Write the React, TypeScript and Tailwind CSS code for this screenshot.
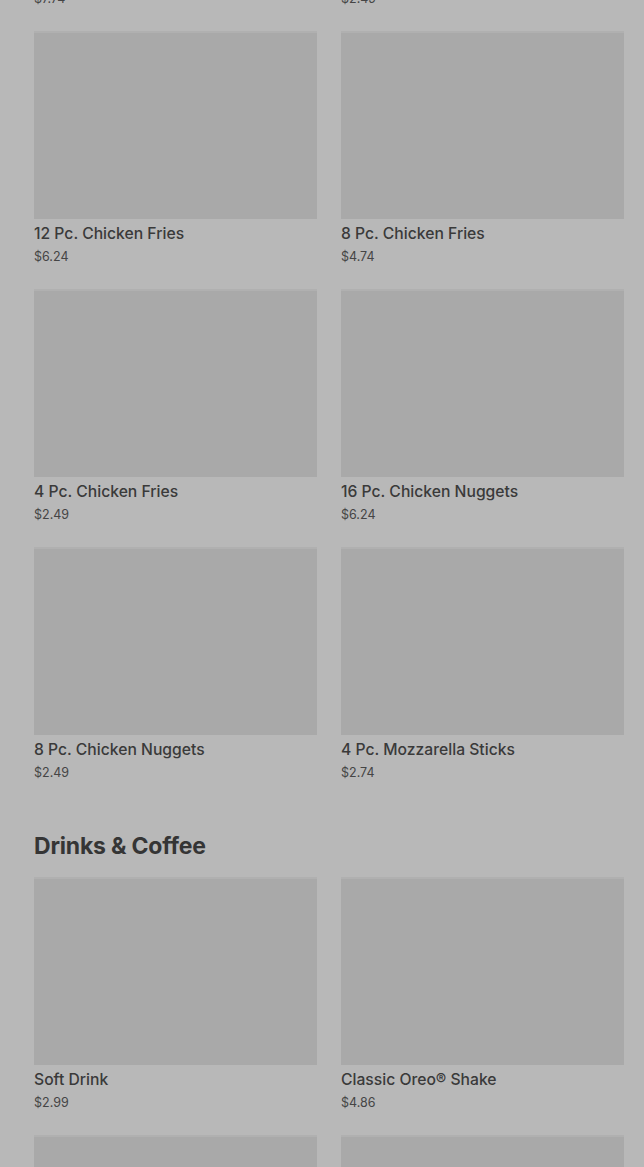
type Item = { name: string; price: string };

const sides: Item[] = [
  { name: "12 Pc. Chicken Fries", price: "$6.24" },
  { name: "8 Pc. Chicken Fries", price: "$4.74" },
  { name: "4 Pc. Chicken Fries", price: "$2.49" },
  { name: "16 Pc. Chicken Nuggets", price: "$6.24" },
  { name: "8 Pc. Chicken Nuggets", price: "$2.49" },
  { name: "4 Pc. Mozzarella Sticks", price: "$2.74" },
];

const drinks: Item[] = [
  { name: "Soft Drink", price: "$2.99" },
  { name: "Classic Oreo® Shake", price: "$4.86" },
  { name: "Coffee", price: "$1.99" },
  { name: "Iced Coffee", price: "$2.49" },
];

function Card({ item }: { item: Item }) {
  return (
    <div className="flex flex-col">
      <div className="h-[188px] bg-[#a9a9a9] border-t-2 border-[#b0b0b0]" />
      <div className="mt-[5px] text-[15.7px] leading-[20px] font-medium text-[#3a3a3a]">{item.name}</div>
      <div className="mt-[4px] text-[12.5px] leading-[18px] text-[#454545]">{item.price}</div>
    </div>
  );
}

function Grid({ items }: { items: Item[] }) {
  return (
    <div className="grid grid-cols-2 gap-x-6 gap-y-[23px]">
      {items.map((it) => (
        <Card key={it.name} item={it} />
      ))}
    </div>
  );
}

export default function App() {
  return (
    <div
      className="min-h-[1167px] bg-[#b8b8b8] pl-[34px] pr-[20px] overflow-hidden"
      style={{ fontFamily: "Inter, 'Liberation Sans', sans-serif" }}
    >
      <div className="-mt-[227px]">
        <Grid
          items={[
            { name: "Whopper Jr.", price: "$7.74" },
            { name: "Chicken Jr.", price: "$2.49" },
          ]}
        />
      </div>
      <div className="mt-[23px]">
        <Grid items={sides} />
      </div>
      <h2 className="mt-[50px] mb-[17px] text-[23px] leading-[28px] font-bold tracking-[-0.2px] text-[#353535]">
        Drinks &amp; Coffee
      </h2>
      <Grid items={drinks} />
    </div>
  );
}
